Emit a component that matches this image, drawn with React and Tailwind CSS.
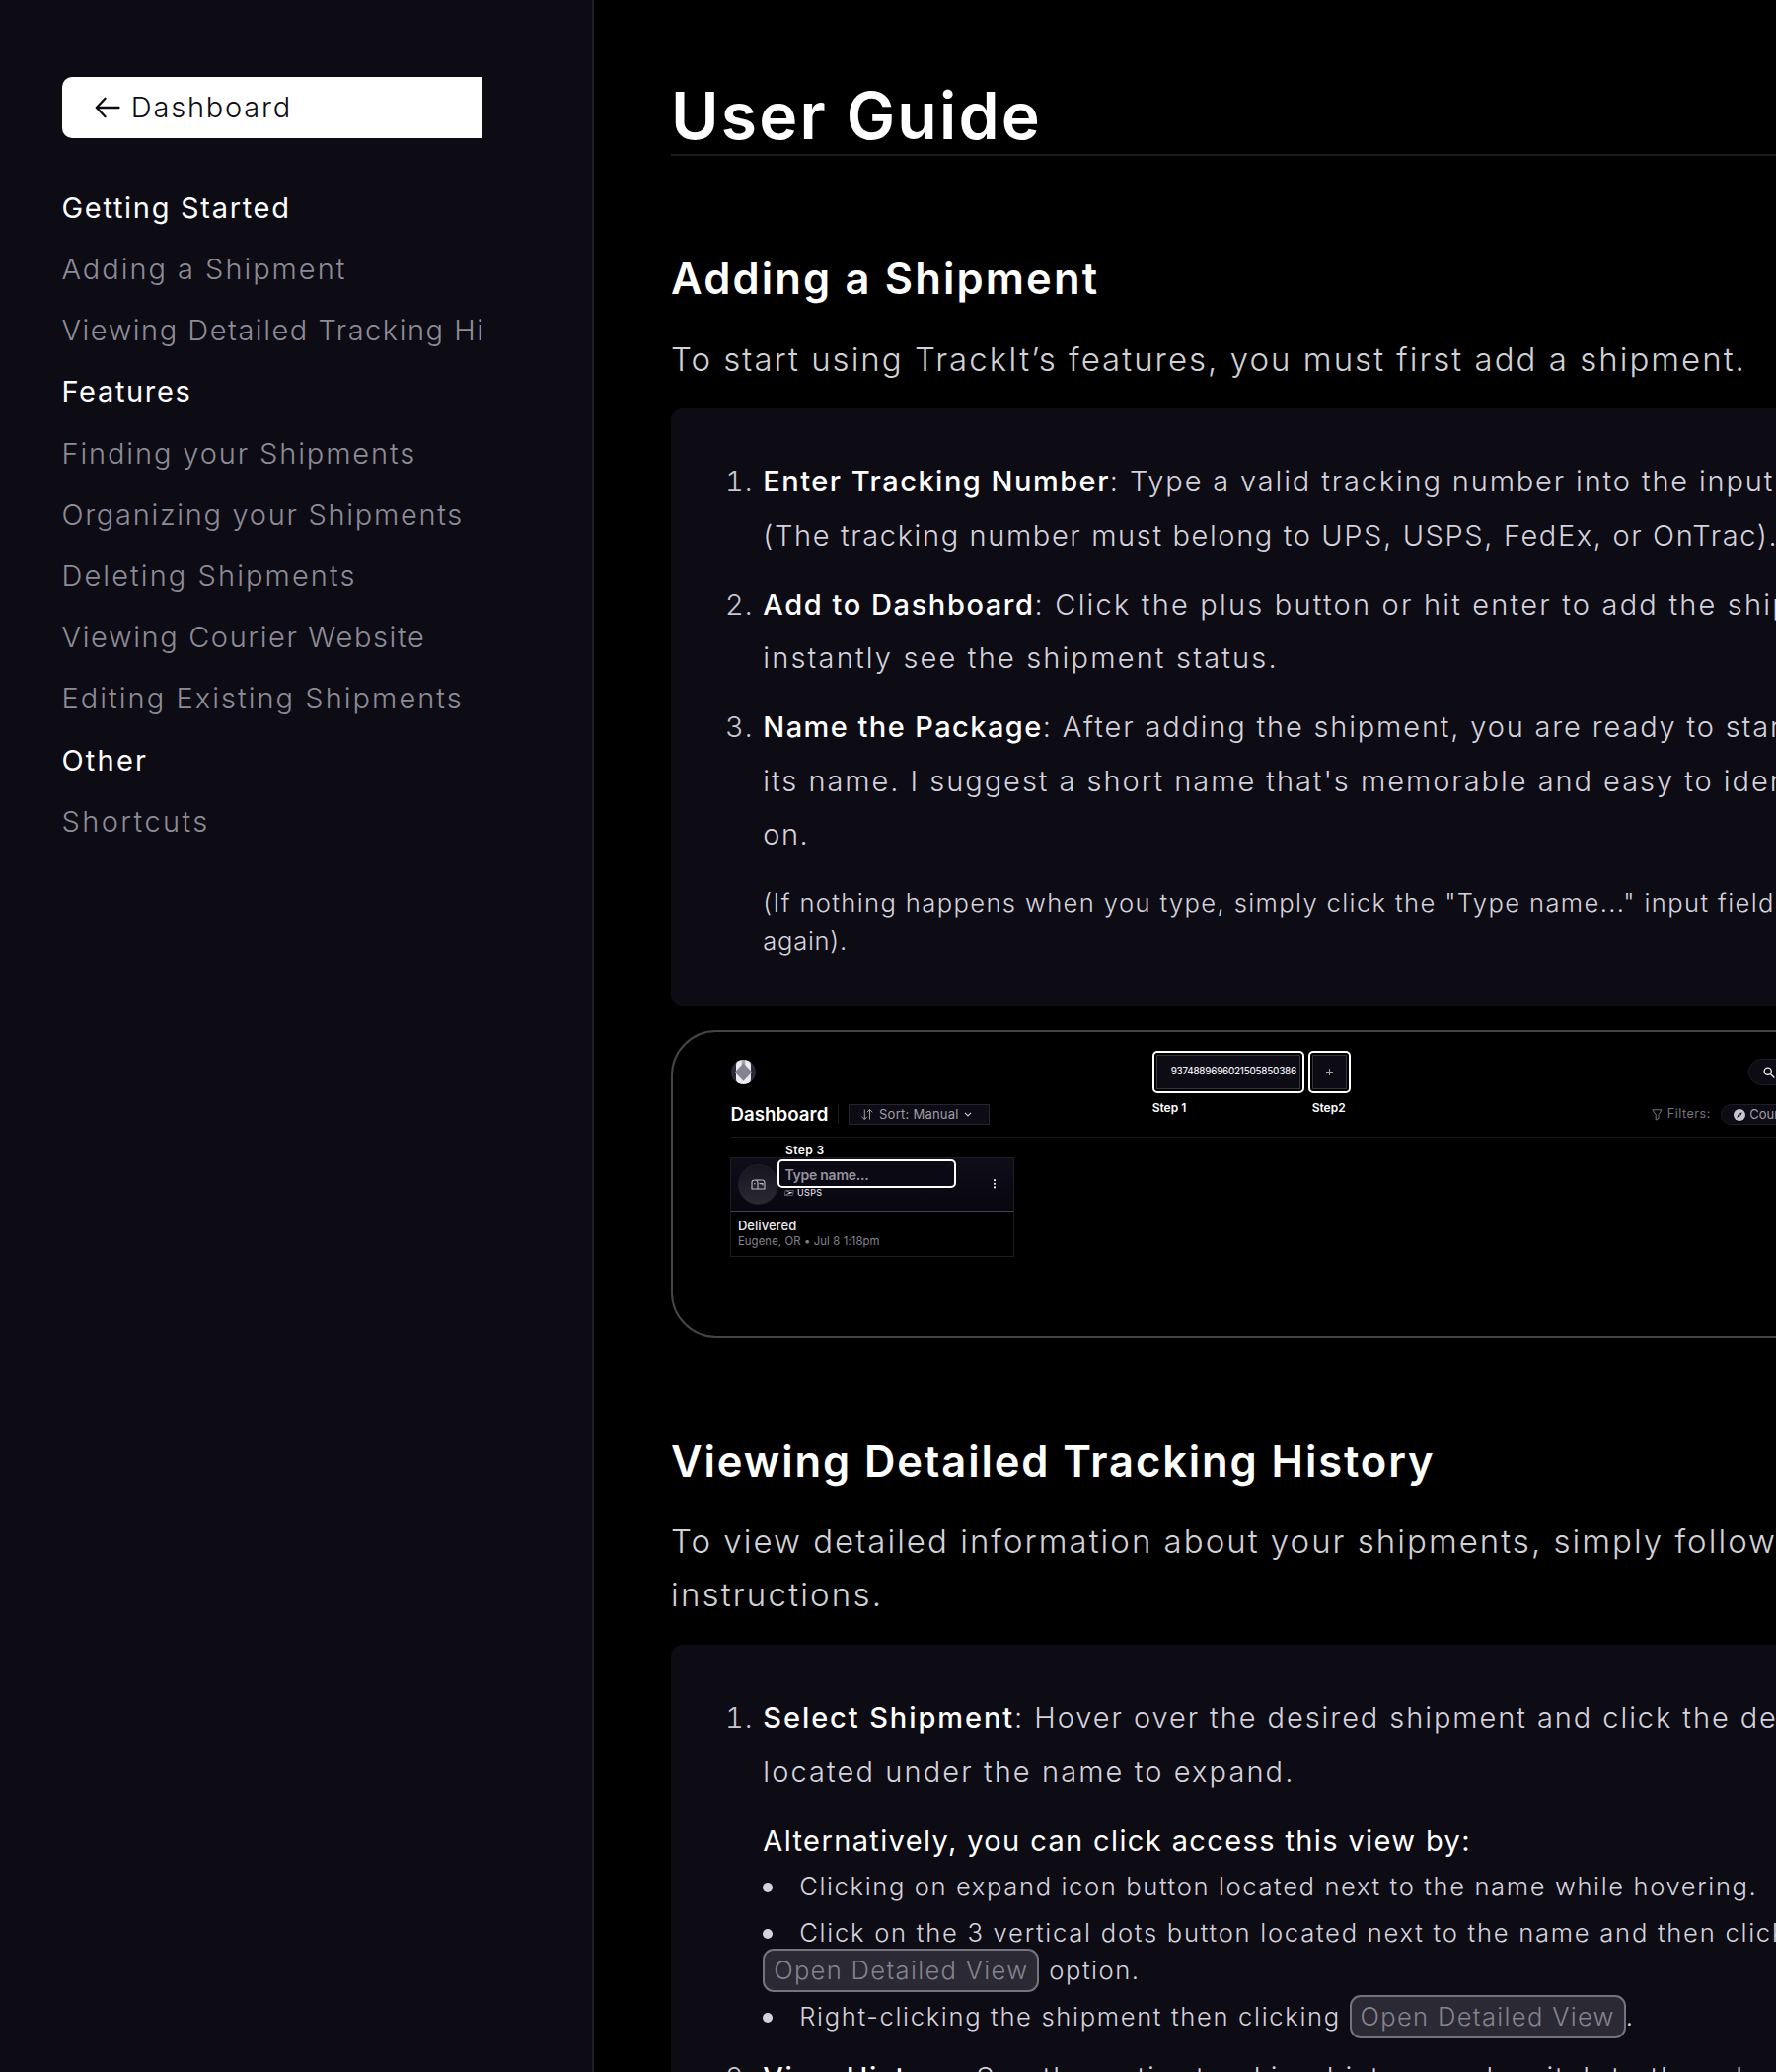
import React from "react";

const NAV = [
  ["Getting Started", "tracking-[1.7px]", true],
  ["Adding a Shipment", "tracking-[1.97px]"],
  ["Viewing Detailed Tracking History", "tracking-[1.52px]"],
  ["Features", "tracking-[1.65px]", true],
  ["Finding your Shipments", "tracking-[1.87px]"],
  ["Organizing your Shipments", "tracking-[1.7px]"],
  ["Deleting Shipments", "tracking-[2.08px]"],
  ["Viewing Courier Website", "tracking-[1.62px]"],
  ["Editing Existing Shipments", "tracking-[2.04px]"],
  ["Other", "tracking-[2.2px]", true],
  ["Shortcuts", "tracking-[2.4px]"],
];

function Sidebar() {
  return (
    <aside className="w-[602px] h-full shrink-0 bg-[#0d0b14] border-r-2 border-[#1f1e24] pl-[62.5px] pt-[77.7px]">
      <div className="w-[426.5px] overflow-hidden">
        <div className="flex h-[62.2px] w-[460px] items-center rounded-[10px] bg-white pl-[33px] text-[29px] font-[350] text-[#0d0b14]">
          <svg width="26" height="22" viewBox="0 0 26 22" fill="none" stroke="currentColor" strokeWidth="2.3" strokeLinecap="round" strokeLinejoin="round">
            <path d="M24.5 11H1.8M10.6 1.8 1.8 11l8.8 9.2" />
          </svg>
          <span className="ml-[11.3px] mt-[1px] tracking-[1.8px] leading-[62.2px]">Dashboard</span>
        </div>
        <nav className="mt-[40px] flex flex-col">
          {NAV.map(([label, tracking, head]) => (
            <a
              key={label}
              className={`h-[62.2px] w-[427px] overflow-hidden whitespace-nowrap text-[29px] leading-[62.2px] ${tracking} ${
                head ? "font-normal text-white" : "font-[350] text-[#8d8b97]"
              }`}
            >
              {label}
            </a>
          ))}
        </nav>
      </div>
    </aside>
  );
}

function Steps({ children }) {
  return <ol className="w-[1300px] rounded-[12px] bg-[#0d0b14] pt-[47.4px] pl-[52px] pb-[47px] mt-[23px]">{children}</ol>;
}

function Step({ n, className = "", children }) {
  return (
    <li className={`flex text-[29px] font-[350] leading-[54.4px] text-[#d4d2dc] ${className}`}>
      <span className="w-[31.5px] shrink-0 text-right tabular-nums tracking-[1px] text-[#c8c6d0]">{n}.</span>
      <div className="ml-[9.8px] whitespace-pre">{children}</div>
    </li>
  );
}

function Term({ className, children }) {
  return <b className={`font-medium text-white ${className}`}>{children}</b>;
}

function Bullet({ children }) {
  return (
    <div className="flex h-[38.6px] items-center">
      <span className="mt-[2px] size-[9.5px] shrink-0 rounded-full bg-[#d4d2dc]" />
      <span className="ml-[27.4px]">{children}</span>
    </div>
  );
}

function Kbd({ children }) {
  return (
    <kbd className="inline-flex h-[44px] w-[280px] shrink-0 items-center justify-center rounded-[11px] border-2 border-[#75737e] bg-[#2b2933] font-[Inter,sans-serif] tracking-[1.3px] text-[#85838f]">
      {children}
    </kbd>
  );
}

function Logo() {
  return (
    <svg className="size-[25px]" viewBox="0 0 25 25">
      <clipPath id="disc"><circle cx="12.5" cy="12.5" r="12.5" /></clipPath>
      <g clipPath="url(#disc)">
        <rect width="25" height="25" fill="#2b2933" />
        <rect x="5" y="0" width="15" height="25" rx="5" fill="#ecebf3" />
        <rect x="10.7" y="0" width="3.6" height="6" fill="#a4a2ad" />
        <path d="M12.5 3.5 21.2 12.6 12.5 21.8 3.8 12.6z" fill="#85838f" />
      </g>
    </svg>
  );
}

function Target({ width, inner, label, indent = "", children }) {
  return (
    <div className={width}>
      <div className="h-[43px] rounded-[5px] border-2 border-white p-[2px]">
        <div className={`flex h-[35px] items-center border border-[#35333e] bg-[#0d0b14] ${inner}`}>{children}</div>
      </div>
      <p className={`mt-[4.5px] text-[12px] font-semibold leading-[20px] whitespace-nowrap text-white ${indent}`}>{label}</p>
    </div>
  );
}

function ShipmentCard() {
  return (
    <div className="ml-[58.4px] h-[101.5px] w-[287.5px] border border-[#1d1b25] bg-black">
      <div className="flex h-[54px] border-b border-[#45434d] bg-gradient-to-b from-[#0f0d18] to-[#08060e] pl-[6.5px]">
        <div className="mt-[6px] flex size-[41px] shrink-0 items-center justify-center rounded-full border border-[#222028] bg-gradient-to-b from-[#17151d] to-[#2b2933]">
          <svg width="15" height="11" viewBox="0 0 15 11" fill="none" stroke="#bdbbc6" strokeWidth="1.1">
            <path d="M3.7 1h7.6A2.8 2.8 0 0 1 14 3.8V10H1V3.8A2.8 2.8 0 0 1 3.7 1zM3.7 1a2.8 2.8 0 0 1 3.3 2.8V10M3 4.8h1.6M8.5 4.6H12v1.8" />
          </svg>
        </div>
        <div className="-ml-[.5px] mt-[1.3px] w-[181px] shrink-0">
          <div className="flex h-[29.5px] items-center rounded-[5px] border-2 border-white bg-[#0b0913] pl-[5px] text-[14px] font-semibold text-[#94929e]">
            <span className="mt-[1px] -tracking-[.25px]">Type name...</span>
          </div>
          <div className="flex h-[12px] items-center pl-[6.5px] text-[9px] font-medium leading-[12px] text-[#dddbe4]">
            <svg width="10" height="6" viewBox="0 0 10 6" className="-mt-[3px]">
              <path d="M1.2.5H9.4L8.3 5.5H.2z" fill="none" stroke="#77757f" strokeWidth=".7" />
              <path d="M1.2.7 9 2.8.4 5.2 5.2 2.7z" fill="#dddbe4" />
            </svg>
            <span className="ml-[3px] -mt-[3px] tracking-[.4px]">USPS</span>
          </div>
        </div>
        <svg className="mt-[21.5px] ml-[36.5px]" width="4" height="10" viewBox="0 0 4 10" fill="#ecebf3">
          <circle cx="2" cy="1.2" r="1.1" /><circle cx="2" cy="4.8" r="1.1" /><circle cx="2" cy="8.4" r="1.1" />
        </svg>
      </div>
      <p className="pl-[6.5px] mt-[4.3px] h-[20px] text-[13px] font-medium leading-[20px] tracking-[.05px] text-[#ecebf3]">Delivered</p>
      <p className="pl-[6.5px] -mt-[2.6px] text-[11.3px] leading-[18px] tracking-[.12px] text-[#85838f] whitespace-nowrap">Eugene, OR • Jul 8 1:18pm</p>
    </div>
  );
}

function DashboardPreview() {
  return (
    <figure className="mt-[24px] h-[311.5px] w-[1300px] overflow-hidden rounded-[46px] border-2 border-[#454547] bg-black">
      <div className="flex h-[73px] items-start">
        <div className="ml-[58.5px] mt-[27.2px]"><Logo /></div>
        <div className="ml-[402.2px] mt-[19px] flex gap-[4.5px]">
          <Target width="w-[154px]" inner="pl-[14px]" label="Step 1">
            <span className="text-[9.8px] font-medium tracking-[-.25px] text-[#ecebf3]">9374889696021505850386</span>
          </Target>
          <Target width="w-[43px]" inner="justify-center" label="Step2" indent="pl-[3.5px]">
            <svg width="7" height="7" viewBox="0 0 7 7" stroke="#a4a2ad" strokeWidth="1"><path d="M3.5 0v7M0 3.5h7" /></svg>
          </Target>
        </div>
        <div className="ml-[403px] mt-[26.5px] flex h-[27.5px] w-[180px] items-center rounded-full border border-[#1f1d26] bg-[#0d0b14] pl-[13.5px]">
          <svg width="12" height="12" viewBox="0 0 12 12" fill="none" stroke="#ecebf3" strokeWidth="1.4"><circle cx="4.7" cy="4.7" r="3.6" /><path d="m7.4 7.4 4 4" /></svg>
        </div>
      </div>
      <div className="ml-[58.5px] flex h-[33.5px] items-start border-b border-[#1a1a1c] whitespace-nowrap">
        <h3 className="w-[99.5px] text-[18.7px] font-semibold leading-[21px] tracking-[.03px] text-white">Dashboard</h3>
        <span className="ml-[9px] h-[20px] w-px bg-[#1a191f]" />
        <div className="ml-[9.5px] flex h-[21px] w-[143px] items-center border border-[#26242e] bg-[#0d0b14] pl-[12px] text-[13px] text-[#a09ea8]">
          <svg width="12" height="11" viewBox="0 0 12 11" fill="none" stroke="currentColor" strokeWidth="1"><path d="M3.3.5v10M.5 7.8l2.8 2.7 2.6-2.7M8.5 10.5V.5M5.9 3.2 8.5.5l2.8 2.7" /></svg>
          <span className="ml-[6.5px] tracking-[.25px]">Sort: Manual</span>
          <svg className="ml-[5.5px]" width="8" height="5" viewBox="0 0 8 5" fill="none" stroke="#c8c6d0" strokeWidth="1.2"><path d="m1 .8 3 3 3-3" /></svg>
        </div>
        <div className="ml-[671.8px] flex h-[21px] items-center text-[12.6px] text-[#77757f]">
          <svg width="11" height="12" viewBox="0 0 11 12" fill="none" stroke="currentColor" strokeWidth="1"><path d="M.8.8h9.4L7 5.6v3.8L4.2 11V5.6z" /></svg>
          <span className="ml-[4.5px] w-[54px] tracking-[.5px]">Filters:</span>
        </div>
        <div className="flex h-[21px] w-[110px] items-center rounded-full border border-[#1f1d26] bg-[#0d0b14] pl-[12.5px] text-[13px] text-[#a09ea8]">
          <svg width="12" height="12" viewBox="0 0 12 12"><circle cx="6" cy="6" r="6" fill="#c8c6d0" /><path d="M8.8 3.2 7 7 3.2 8.8 5 5z" fill="#0d0b14" /><circle cx="6" cy="6" r=".8" fill="#c8c6d0" /></svg>
          <span className="ml-[4px]">Courier</span>
        </div>
      </div>
      <p className="ml-[114px] mt-[3.3px] h-[16.4px] text-[12px] font-semibold leading-[20px] tracking-[.4px] text-white">Step 3</p>
      <ShipmentCard />
    </figure>
  );
}

export default function App() {
  return (
    <div className="flex h-[2100px] w-[1800px] overflow-hidden bg-black font-[Inter,sans-serif]">
      <Sidebar />
      <main className="w-[1198px] shrink-0 overflow-hidden pl-[78px] pt-[78px]">
        <h1 className="h-[79.5px] w-[1300px] border-b-2 border-[#1b1b1e] text-[66px] font-semibold leading-[79px] tracking-[2.2px] text-white">User Guide</h1>

        <section>
          <h2 className="mt-[97px] text-[43.5px] font-semibold leading-[54px] tracking-[2.15px] text-white">Adding a Shipment</h2>
          <p className="mt-[28px] whitespace-nowrap text-[33px] font-[350] leading-[54.4px] tracking-[2.02px] text-[#d2d2d6]">To start using TrackIt’s features, you must first add a shipment.</p>
          <Steps>
            <Step n="1">
              <Term className="tracking-[1.5px]">Enter Tracking Number</Term>
              <span className="tracking-[1.85px]">: Type a valid tracking number into the input bar</span>
              <br />
              <span className="tracking-[1.62px]">(The tracking number must belong to UPS, USPS, FedEx, or OnTrac).</span>
            </Step>
            <Step n="2" className="mt-[15.6px]">
              <Term className="tracking-[1.58px]">Add to Dashboard</Term>
              <span className="tracking-[2.2px]">: Click the plus button or hit enter to add the shipment</span>
              <br />
              <span className="tracking-[2.17px]">instantly see the shipment status.</span>
            </Step>
            <Step n="3" className="mt-[15.6px]">
              <Term className="tracking-[1.44px]">Name the Package</Term>
              <span className="tracking-[1.83px]">: After adding the shipment, you are ready to start</span>
              <br />
              <span className="tracking-[1.96px]">its name. I suggest a short name that's memorable and easy to identify</span>
              <br />
              <span className="tracking-[1.5px]">on.</span>
              <p className="mt-[22.8px] text-[25.6px] leading-[38.6px]">
                <span className="tracking-[1.36px]">(If nothing happens when you type, simply click the "Type name..." input field</span>
                <br />
                <span className="tracking-[.7px]">again).</span>
              </p>
            </Step>
          </Steps>
          <DashboardPreview />
        </section>

        <section>
          <h2 className="mt-[98px] whitespace-nowrap text-[43.5px] font-semibold leading-[54px] tracking-[1.89px] text-white">Viewing Detailed Tracking History</h2>
          <p className="mt-[27.2px] whitespace-pre text-[33px] font-[350] leading-[54.4px] text-[#d2d2d6]">
            <span className="tracking-[2.02px]">To view detailed information about your shipments, simply follow these</span>
            <br />
            <span className="tracking-[2.2px]">instructions.</span>
          </p>
          <Steps>
            <Step n="1">
              <Term className="tracking-[1.92px]">Select Shipment</Term>
              <span className="tracking-[1.93px]">: Hover over the desired shipment and click the delivery</span>
              <br />
              <span className="tracking-[2.1px]">located under the name to expand.</span>
              <p className="mt-[15.5px] font-normal tracking-[1.38px] text-white">Alternatively, you can click access this view by:</p>
              <div className="text-[25.6px] leading-[38.6px]">
                <Bullet><span className="tracking-[1.61px]">Clicking on expand icon button located next to the name while hovering.</span></Bullet>
                <div className="mt-[8px]"><Bullet><span className="tracking-[1.73px]">Click on the 3 vertical dots button located next to the name and then click</span></Bullet></div>
                <div className="flex h-[38.6px] items-center">
                  <Kbd>Open Detailed View</Kbd>
                  <span className="ml-[10px] tracking-[1.5px]">option.</span>
                </div>
                <div className="mt-[8px] flex h-[38.6px] items-center">
                  <Bullet><span className="tracking-[1.65px]">Right-clicking the shipment then clicking </span></Bullet>
                  <Kbd>Open Detailed View</Kbd>
                  <span>.</span>
                </div>
              </div>
            </Step>
            <Step n="2" className="mt-[15.6px]">
              <Term className="tracking-[1.65px]">View History</Term>
              <span className="tracking-[1.85px]">: See the entire tracking history and switch to the ad</span>
            </Step>
          </Steps>
        </section>
      </main>
    </div>
  );
}
